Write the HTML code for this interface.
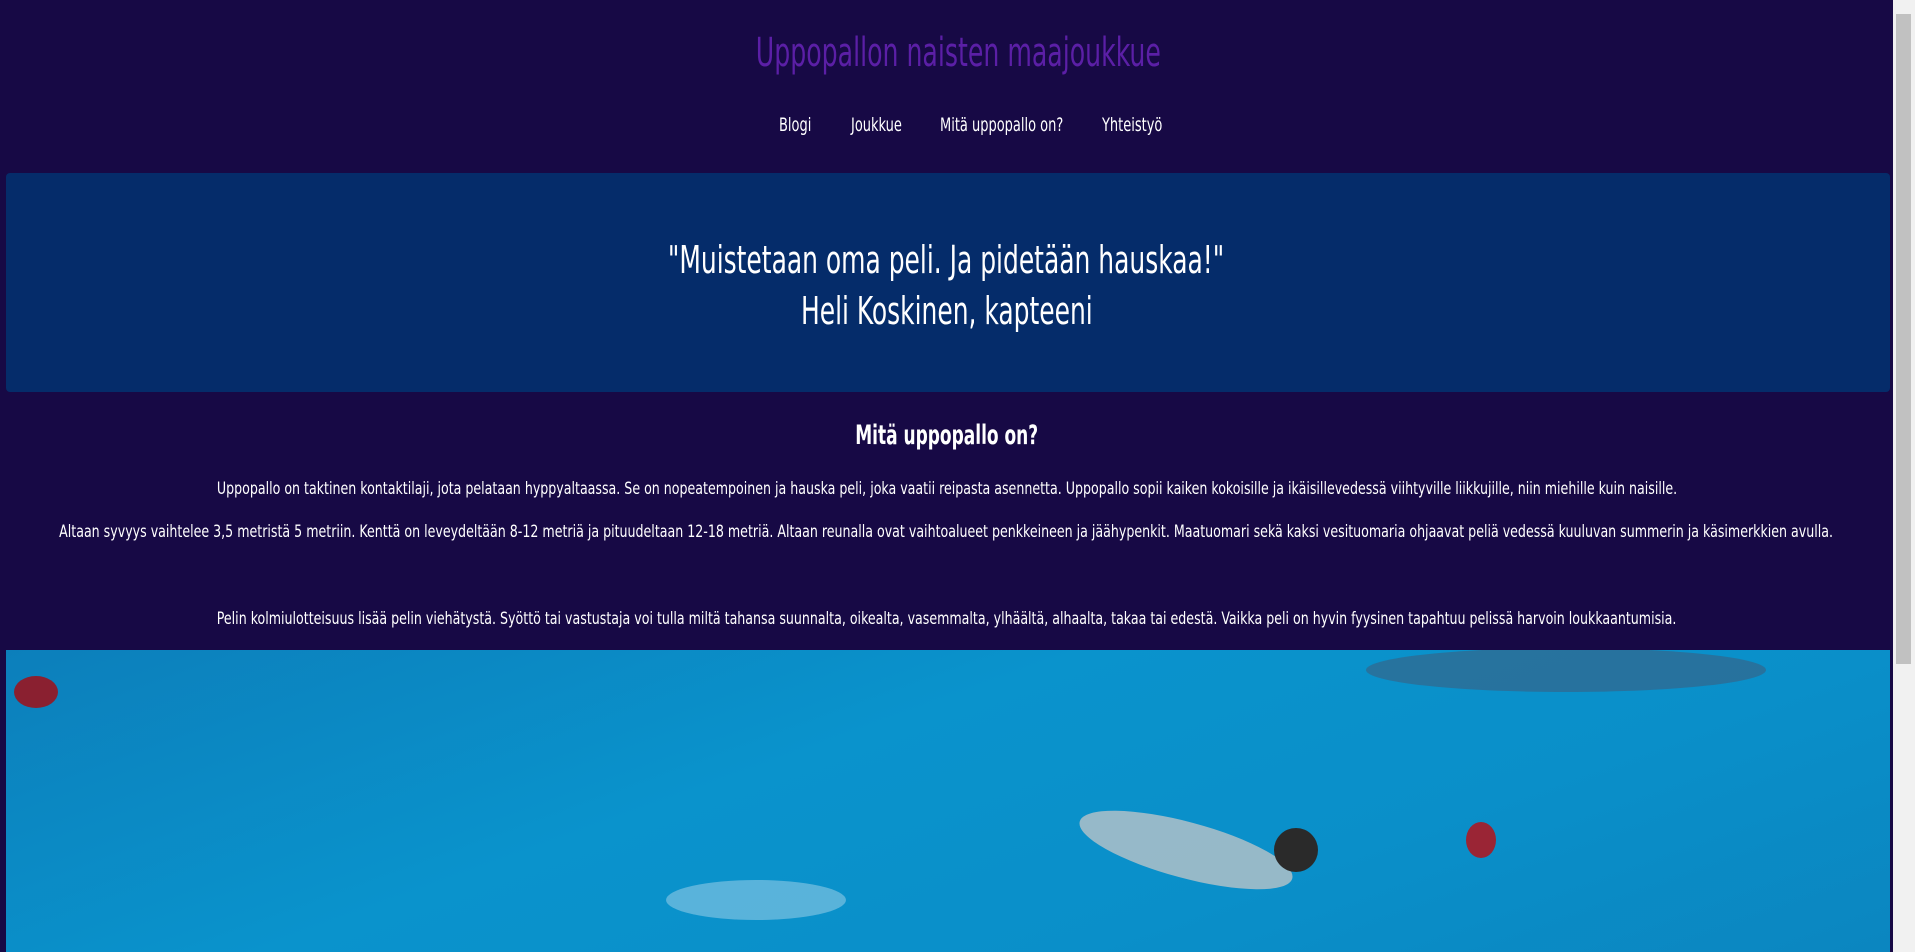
<!DOCTYPE html>
<html><head><meta charset="utf-8"><style>
html,body{margin:0;padding:0;}
body{width:1915px;height:952px;overflow:hidden;background:#170945;font-family:"DejaVu Sans Condensed","Liberation Sans",sans-serif;color:#fff;position:relative;}
.c{position:absolute;left:-1000px;width:3893px;text-align:center;white-space:nowrap;}
.c span{display:inline-block;transform-origin:center;}
#title{top:30px;left:-988px;font-size:40px;color:#5b1fa6;}
#title span{transform:scaleX(0.70);}
.nav{position:absolute;top:114px;font-size:19px;transform:scaleX(0.76);transform-origin:left;white-space:nowrap;}
#box{position:absolute;left:6px;top:173px;width:1884px;height:219px;background:#052c6a;border-radius:4px;}
.q{font-size:38px;}
.q span{transform:scaleX(0.73);}
#h2{top:420px;font-size:27px;font-weight:bold;}
#h2 span{transform:scaleX(0.70);}
.p{font-size:17px;}
.p span{transform:scaleX(0.825);}
#img{position:absolute;left:6px;top:650px;width:1884px;height:302px;background:linear-gradient(160deg,#0c7fbb 0%,#0a93cc 40%,#0a8fc9 70%,#0b86c0 100%);overflow:hidden;}
#sb{position:absolute;left:1893px;top:0;width:22px;height:952px;background:#f1f1f1;}
#th{position:absolute;left:1896px;top:14px;width:15px;height:650px;background:#c1c1c1;}
</style></head><body>
<div class="c" id="title"><span>Uppopallon naisten maajoukkue</span></div>
<div class="nav" style="left:779px">Blogi</div>
<div class="nav" style="left:851px">Joukkue</div>
<div class="nav" style="left:940px">Mitä uppopallo on?</div>
<div class="nav" style="left:1102px">Yhteistyö</div>
<div id="box"></div>
<div class="c q" style="top:238px"><span>"Muistetaan oma peli. Ja pidetään hauskaa!"</span></div>
<div class="c q" style="top:289px"><span>Heli Koskinen, kapteeni</span></div>
<div class="c" id="h2"><span>Mitä uppopallo on?</span></div>
<div class="c p" style="top:479px"><span>Uppopallo on taktinen kontaktilaji, jota pelataan hyppyaltaassa. Se on nopeatempoinen ja hauska peli, joka vaatii reipasta asennetta. Uppopallo sopii kaiken kokoisille ja ikäisillevedessä viihtyville liikkujille, niin miehille kuin naisille.</span></div>
<div class="c p" style="top:522px"><span>Altaan syvyys vaihtelee 3,5 metristä 5 metriin. Kenttä on leveydeltään 8-12 metriä ja pituudeltaan 12-18 metriä. Altaan reunalla ovat vaihtoalueet penkkeineen ja jäähypenkit. Maatuomari sekä kaksi vesituomaria ohjaavat peliä vedessä kuuluvan summerin ja käsimerkkien avulla.</span></div>
<div class="c p" style="top:609px"><span>Pelin kolmiulotteisuus lisää pelin viehätystä. Syöttö tai vastustaja voi tulla miltä tahansa suunnalta, oikealta, vasemmalta, ylhäältä, alhaalta, takaa tai edestä. Vaikka peli on hyvin fyysinen tapahtuu pelissä harvoin loukkaantumisia.</span></div>
<div id="img">
<svg width="1884" height="302" viewBox="0 0 1884 302">
<ellipse cx="30" cy="42" rx="22" ry="16" fill="#8a2030"/>
<ellipse cx="1560" cy="20" rx="200" ry="22" fill="#3b5f80" opacity=".6"/>
<ellipse cx="1180" cy="200" rx="110" ry="28" fill="#b9c3c8" opacity=".8" transform="rotate(15 1180 200)"/>
<circle cx="1290" cy="200" r="22" fill="#2a2a2a"/>
<ellipse cx="1475" cy="190" rx="15" ry="18" fill="#9a2535"/>
<ellipse cx="750" cy="250" rx="90" ry="20" fill="#cfe6f2" opacity=".4"/>
</svg>
</div>
<div id="sb"></div><div id="th"></div>
</body></html>
